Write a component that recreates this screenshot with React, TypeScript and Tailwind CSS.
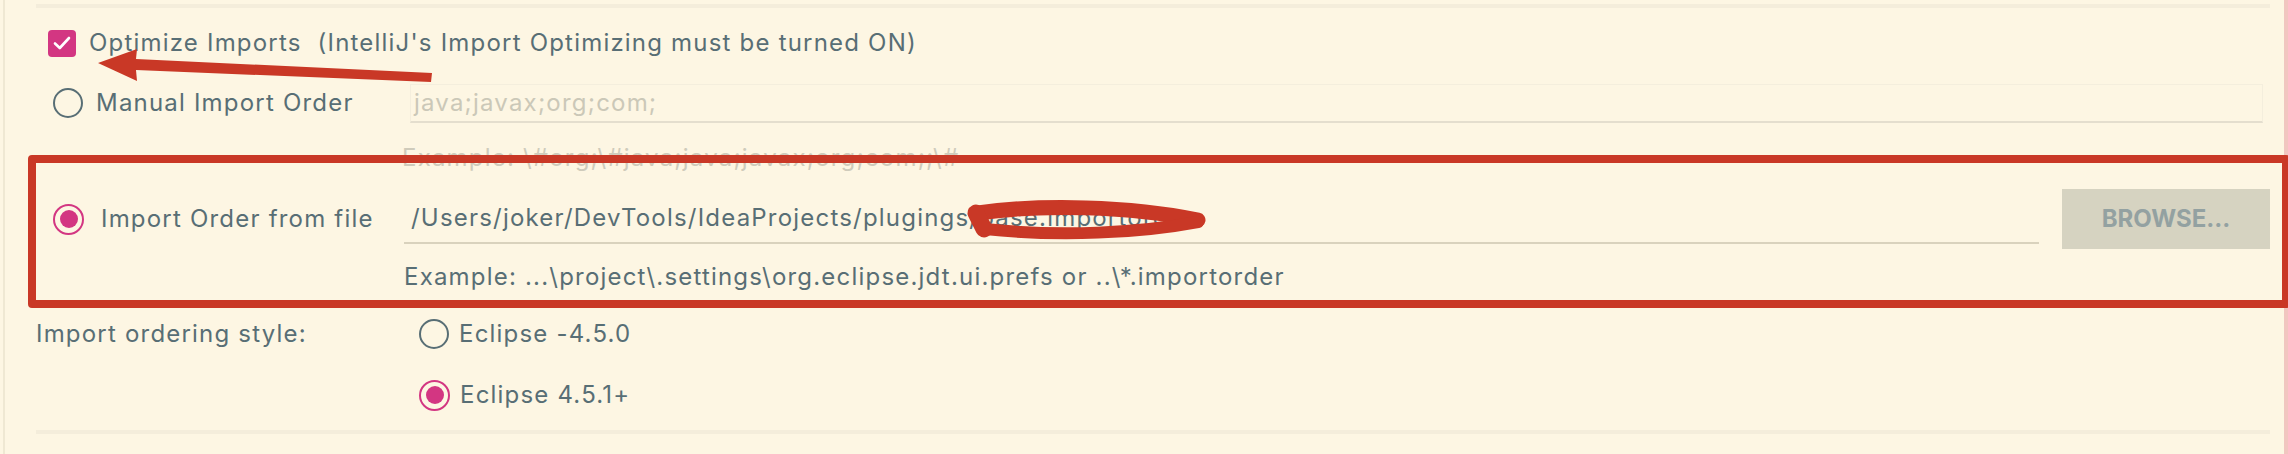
import React from "react";

const text = "text-[24px] tracking-[1.2px] text-[#586e75] leading-none";

const Radio = ({ on }: { on?: boolean }) =>
  on ? (
    <span className="flex h-[31px] w-[31px] shrink-0 items-center justify-center rounded-full border-2 border-[#d33682]">
      <span className="h-[18px] w-[18px] rounded-full bg-[#d33682]" />
    </span>
  ) : (
    <span className="h-[30px] w-[30px] shrink-0 rounded-full border-2 border-[#586e75]" />
  );

export default function App() {
  return (
    <div className="relative flex h-[454px] w-full overflow-hidden bg-[#fdf6e3] font-['Inter','Noto_Sans',sans-serif]">
      <div className="ml-[3px] w-[2px] shrink-0 bg-[#efe8d3]" />
      <div className="flex flex-1 flex-col pl-[31px] pr-[14px]">
        <div className="mt-[4px] h-[4px] bg-[#f4eddb]" />

        {/* optimize imports */}
        <div className="flex h-[70px] items-center">
          <span className="ml-[12px] flex h-[27px] w-[28px] items-center justify-center rounded-[4px] bg-[#d33682]">
            <svg width="18" height="14" viewBox="0 0 18 14" fill="none">
              <path d="M2 7.5 L6.8 12 L16 2" stroke="#fff" strokeWidth="2.6" strokeLinecap="round" strokeLinejoin="round" />
            </svg>
          </span>
          <span className={`ml-[13px] ${text}`}>Optimize Imports&nbsp;&nbsp;(IntelliJ's Import Optimizing must be turned ON)</span>
        </div>

        {/* manual order */}
        <div className="flex h-[50px] items-center">
          <div className="flex w-[374px] items-center pl-[17px]">
            <Radio />
            <span className={`ml-[13px] ${text}`}>Manual Import Order</span>
          </div>
          <div className="mr-[7px] flex h-[39px] flex-1 items-center border border-b-2 border-[#f4eedd] border-b-[#e4dece] pl-[3px]">
            <span className="text-[24px] leading-none tracking-[1.2px] text-[#cbc8b8]">java;javax;org;com;</span>
          </div>
        </div>

        <div className="flex h-[60px] items-center pl-[366px]">
          <span className="text-[24px] leading-none tracking-[1.2px] text-[#cfcbbb]">Example: \#org;\#java;java;javax;org;com;;\#</span>
        </div>

        {/* from file */}
        <div className="flex h-[62px] items-center">
          <div className="flex w-[368px] items-center pl-[17px]">
            <Radio on />
            <span className={`ml-[17px] ${text}`}>Import Order from file</span>
          </div>
          <div className="flex h-[50px] flex-1 items-center border-b-2 border-[#d9d2bd] pl-[7px]">
            <span className={text}>/Users/joker/DevTools/IdeaProjects/plugings/base.importorder</span>
          </div>
          <button className="ml-[23px] flex h-[60px] w-[208px] items-center justify-center bg-[#d6d3c1] text-[24px] font-bold leading-none text-[#93a1a1]">
            BROWSE...
          </button>
        </div>

        <div className="flex h-[54px] items-center pl-[368px]">
          <span className={text}>Example: ...\project\.settings\org.eclipse.jdt.ui.prefs or ..\*.importorder</span>
        </div>

        {/* ordering style */}
        <div className="flex h-[60px] items-center">
          <span className={`w-[383px] ${text}`}>Import ordering style:</span>
          <Radio />
          <span className={`ml-[10px] ${text}`}>Eclipse -4.5.0</span>
        </div>
        <div className="flex h-[62px] items-center pl-[383px]">
          <Radio on />
          <span className={`ml-[10px] ${text}`}>Eclipse 4.5.1+</span>
        </div>

        <div className="mt-[4px] h-[4px] bg-[#f4eddb]" />
      </div>
      <div className="w-[4px] shrink-0 bg-[#f1c6c0]" />

      {/* annotations */}
      <div className="absolute left-[28px] top-[155px] h-[153px] w-[2262px] rounded-[4px] border-[8px] border-[#c93826]" />
      <svg className="absolute left-0 top-0" width="2288" height="454" viewBox="0 0 2288 454">
        <polygon points="98,63 137,49 136,59 432,73 431,82 136,70 137,81" fill="#c93826" />
        <g stroke="#c93826" fill="none" strokeLinecap="round" strokeLinejoin="round">
          <path d="M978 213 C 1040 204, 1130 206, 1198 220" strokeWidth="15" />
          <path d="M1198 222 C 1140 233, 1060 237, 985 229" strokeWidth="12" />
          <path d="M976 213 L 984 229" strokeWidth="17" />
        </g>
      </svg>
    </div>
  );
}
